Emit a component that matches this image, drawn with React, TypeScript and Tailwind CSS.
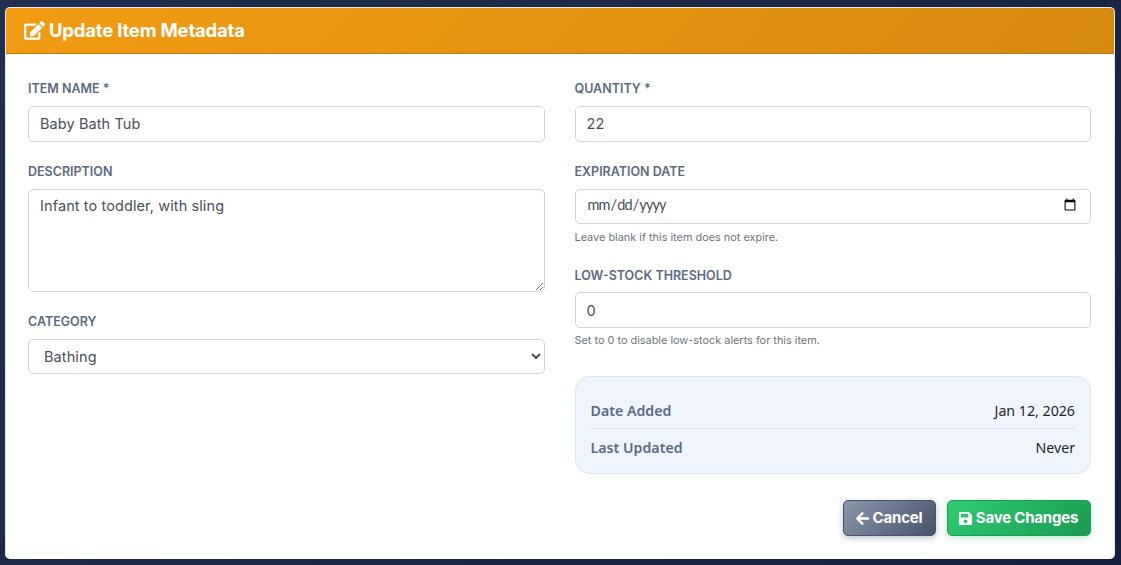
import { FaArrowLeft, FaEdit, FaSave } from "react-icons/fa";

const labelClass =
  "block text-[12.5px] leading-[19px] font-semibold tracking-[0px] uppercase text-[#5b6b82]";
const controlClass =
  "block w-full px-[11px] border border-[#d1d5db] rounded-[5px] bg-white text-[#495057] outline-none";
const inputClass = `${controlClass} h-[36px] pb-[2px] text-[14.5px] tracking-[0.1px]`;
const helpClass = "text-[10.9px] leading-[16px] text-[#6c757d]";

export default function App() {
  return (
    <div
      className="h-screen overflow-hidden bg-[linear-gradient(135deg,#212f50,#15213c)] pt-[7px] pl-[5px] pr-[6px]"
      style={{ fontFamily: "Inter, 'Noto Sans', sans-serif" }}
    >
      <div className="h-[552px] bg-white rounded-[5px] border-t border-x border-[#e5e7eb] overflow-hidden">
        <div className="h-[46px] flex items-center gap-[4px] pl-[18px] border-b border-[#c27c0e] bg-[linear-gradient(135deg,#f39c12,#d68910)] text-white">
          <FaEdit className="w-[21px] h-[19px]" />
          <h2 className="text-[18.5px] font-bold tracking-[-0.2px]">Update Item Metadata</h2>
        </div>
        <form className="pt-[25px] pl-[22px] pr-[23px]">
          <div className="grid grid-cols-2 gap-x-[30px]">
            <div className="flex flex-col">
              <label className={`${labelClass} mb-[8px]`}>Item Name *</label>
              <input className={inputClass} defaultValue="Baby Bath Tub" />
              <label className={`${labelClass} mt-[20px] mb-[8px]`}>Description</label>
              <textarea
                className={`${controlClass} h-[103px] pt-[5px] pb-[6px] text-[14.5px] leading-[22px] tracking-[0.1px]`}
                defaultValue="Infant to toddler, with sling"
              />
              <label className={`${labelClass} mt-[20px] mb-[8px]`}>Category</label>
              <select className={`${controlClass} h-[35px] text-[14.5px] tracking-[0.1px]`} defaultValue="Bathing">
                <option>Bathing</option>
              </select>
            </div>
            <div className="flex flex-col">
              <label className={`${labelClass} mb-[8px]`}>Quantity *</label>
              <input className={inputClass} defaultValue="22" />
              <label className={`${labelClass} mt-[20px] mb-[8px]`}>Expiration Date</label>
              <input type="date" className={`${controlClass} h-[35px] pb-[3px] text-[14.5px] tracking-[-0.9px] font-['Lato']`} />
              <p className={`${helpClass} mt-[5px]`}>Leave blank if this item does not expire.</p>
              <label className={`${labelClass} mt-[21px] mb-[7px]`}>Low-Stock Threshold</label>
              <input className={`${controlClass} h-[36px] text-[14.5px] tracking-[0.1px]`} defaultValue="0" />
              <p className={`${helpClass} mt-[4px]`}>Set to 0 to disable low-stock alerts for this item.</p>
              <div
                className="mt-[28px] h-[98px] px-[15px] pt-[16px] rounded-[14px] border border-[#dbe7f7] bg-[#f0f5fd] text-[14.2px]"
                style={{ fontFamily: "'Noto Sans', sans-serif" }}
              >
                <div className="flex justify-between items-center h-[36px] border-b border-[#dbe5f3]">
                  <span className="font-semibold text-[#5b6b82]">Date Added</span>
                  <span className="text-[#212529]">Jan 12, 2026</span>
                </div>
                <div className="flex justify-between items-center h-[37px]">
                  <span className="font-semibold text-[#5b6b82]">Last Updated</span>
                  <span className="text-[#212529]">Never</span>
                </div>
              </div>
            </div>
          </div>
          <div className="flex justify-end gap-[11px] mt-[26px]">
            <button
              type="button"
              className="w-[93px] h-[36px] pr-[2px] flex items-center justify-center gap-[3px] rounded-[5px] border border-[#475569] bg-[linear-gradient(135deg,#8a97ab,#475369)] text-white text-[15px] font-bold tracking-[-0.2px] shadow-[0_2px_6px_rgba(71,85,105,0.35)]"
            >
              <FaArrowLeft className="w-[15px] h-[15px]" />
              Cancel
            </button>
            <button
              type="button"
              className="w-[144px] h-[36px] pr-[2px] flex items-center justify-center gap-[3px] rounded-[5px] border border-[#1d9a55] bg-[linear-gradient(135deg,#2ecc71,#1c9a53)] text-white text-[15px] font-bold tracking-[-0.2px] shadow-[0_2px_6px_rgba(34,197,94,0.3)]"
            >
              <FaSave className="w-[15px] h-[15px]" />
              Save Changes
            </button>
          </div>
        </form>
      </div>
    </div>
  );
}
